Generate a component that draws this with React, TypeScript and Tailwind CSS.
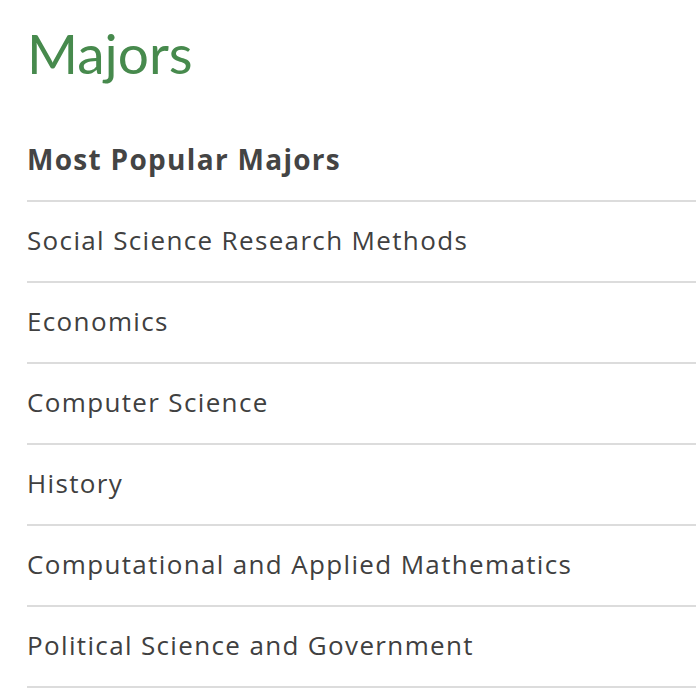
import React from "react";

const majors = [
  "Social Science Research Methods",
  "Economics",
  "Computer Science",
  "History",
  "Computational and Applied Mathematics",
  "Political Science and Government",
];

export default function App() {
  return (
    <div
      className="w-[696px] h-[696px] overflow-hidden bg-white pl-[27px]"
      style={{ fontFamily: "'Open Sans', sans-serif" }}
    >
      <h1
        className="h-[106px] flex items-center text-[55px] leading-none text-[#478a4d] font-normal"
        style={{ fontFamily: "Lato, sans-serif" }}
      >
        Majors
      </h1>
      <h2 className="h-[96px] pt-[12px] flex items-center text-[28px] leading-none font-bold text-[#444444] border-b-2 border-[#dcdcdc] tracking-[1.3px]">
        Most Popular Majors
      </h2>
      <ul>
        {majors.map((m) => (
          <li
            key={m}
            className="h-[81px] pb-[3px] flex items-center text-[26px] leading-none text-[#404040] border-b-2 border-[#dcdcdc] tracking-[1.35px]"
          >
            {m}
          </li>
        ))}
      </ul>
    </div>
  );
}
